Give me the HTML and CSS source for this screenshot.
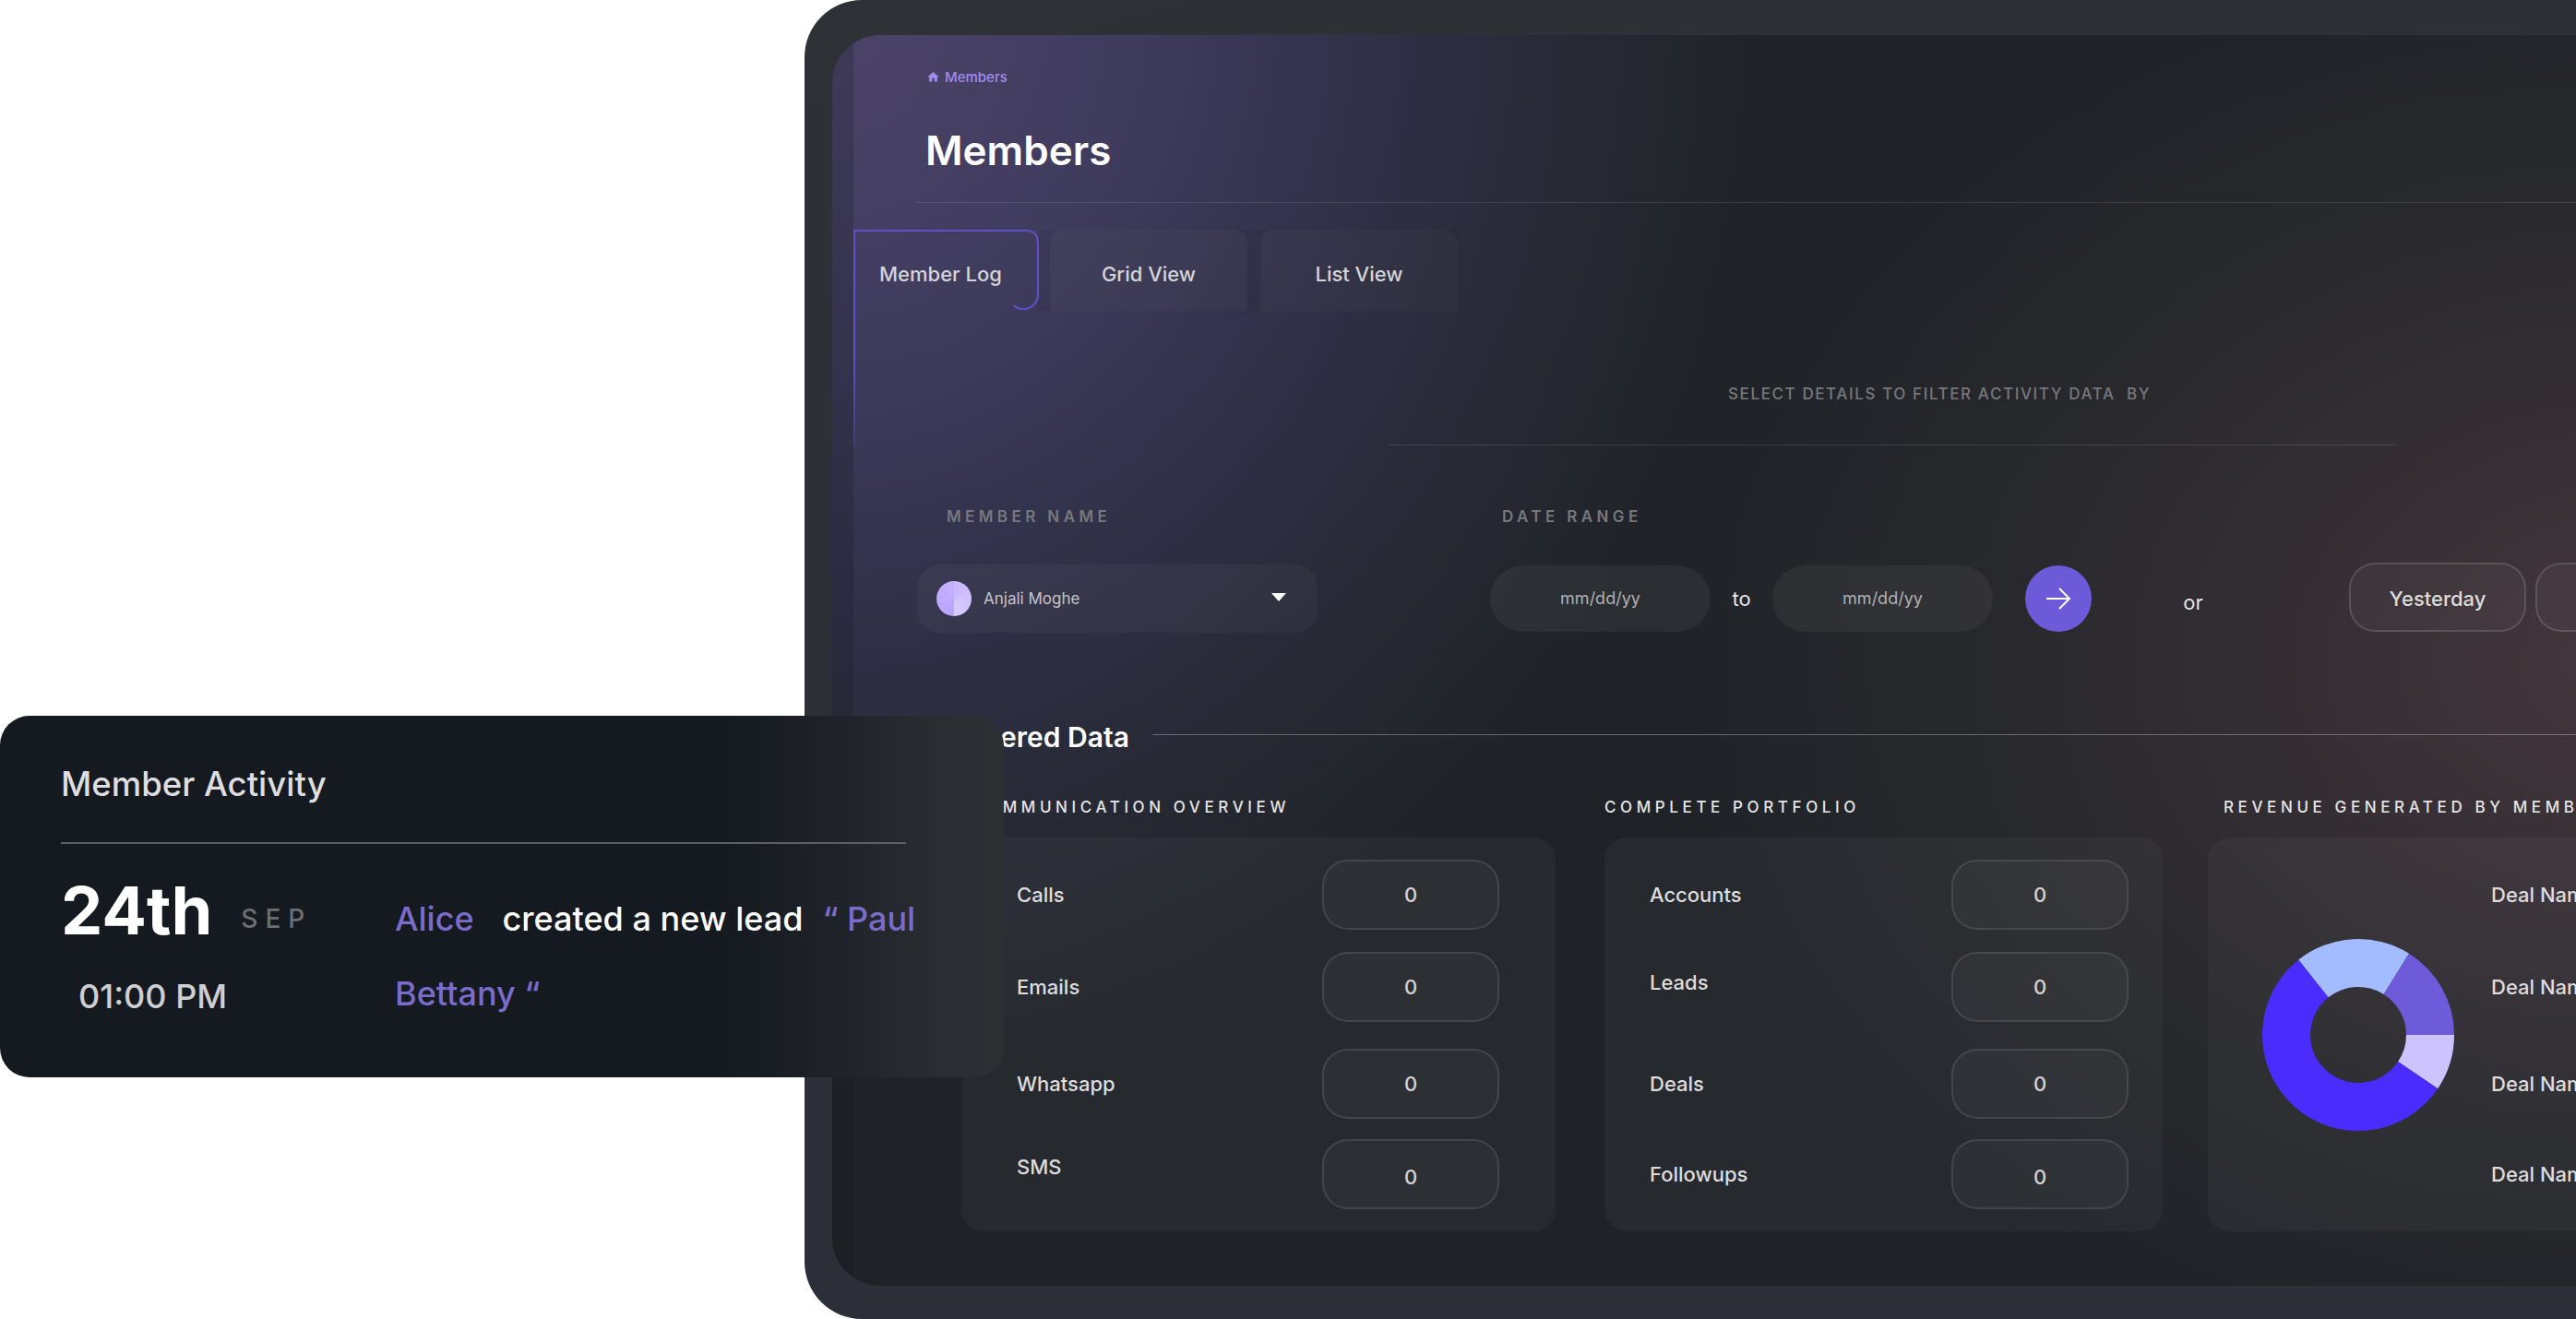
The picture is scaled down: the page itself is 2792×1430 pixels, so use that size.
FILE: index.html
```html
<!DOCTYPE html>
<html lang="en">
<head>
    <meta charset="UTF-8">
    <title>Members</title>
    <link rel="stylesheet" href="styles.css">
</head>
<body>
    <div id="pagewrap">

        <!-- Tablet frame with the members page -->
        <div class="device">
            <div class="screen">
                <div class="rail"></div>
                <main class="main">
                    <div class="crumbs">
                        <svg class="home-icon" viewBox="0 0 24 24"><path d="M10 20v-6h4v6h5v-8h3L12 3 2 12h3v8z"/></svg>
                        <span>Members</span>
                    </div>
                    <h1 class="page-title">Members</h1>
                    <div class="page-rule"></div>

                    <!-- Tabs -->
                    <div class="tabs">
                        <div class="tab tab-active">
                            Member Log
                            <svg class="tab-outline" viewBox="0 0 204 238">
                                <defs>
                                    <linearGradient id="tabFade" gradientUnits="userSpaceOnUse" x1="0" y1="0" x2="0" y2="236">
                                        <stop offset="0" stop-color="#5f50cc"/>
                                        <stop offset="0.6" stop-color="#5f50cc"/>
                                        <stop offset="1" stop-color="#5f50cc" stop-opacity="0.2"/>
                                    </linearGradient>
                                </defs>
                                <path class="tab-left" d="M1 0V236"/>
                                <path class="tab-edge" d="M1 1H188C195 1 200 6 200 14V70C200 80 192 86 184 86C180 86 176 84 174 82"/>
                            </svg>
                        </div>
                        <div class="tab-rest">
                            <div class="tab">Grid View</div>
                            <div class="tab">List View</div>
                        </div>
                    </div>

                    <!-- Filters -->
                    <p class="filter-title">SELECT DETAILS TO FILTER ACTIVITY DATA &nbsp;BY</p>
                    <div class="filter-rule"></div>

                    <div class="filters">
                        <div class="field-member">
                            <div class="field-label">MEMBER NAME</div>
                            <div class="member-select">
                                <span class="avatar"></span>
                                <span class="member-name">Anjali Moghe</span>
                                <span class="caret"></span>
                            </div>
                        </div>
                        <div class="field-date">
                            <div class="field-label">DATE RANGE</div>
                            <div class="date-controls">
                                <div class="date-input">mm/dd/yy</div>
                                <span class="joiner">to</span>
                                <div class="date-input">mm/dd/yy</div>
                                <button class="go-button">
                                    <svg viewBox="0 0 30 26"><path d="M2 13H27M16 2L27 13L16 24"/></svg>
                                </button>
                                <span class="joiner joiner-or">or</span>
                                <div class="quick-range">Yesterday</div>
                                <div class="quick-range">Week</div>
                            </div>
                        </div>
                    </div>

                    <!-- Filtered data -->
                    <div class="data-heading">
                        <h2>Filtered Data</h2>
                        <div class="data-line"></div>
                    </div>

                    <div class="columns">
                        <section class="col col-comm">
                            <h3>COMMUNICATION OVERVIEW</h3>
                            <div class="panel">
                                <div class="row"><span class="row-label">Calls</span><span class="value">0</span></div>
                                <div class="row"><span class="row-label">Emails</span><span class="value">0</span></div>
                                <div class="row row-far"><span class="row-label">Whatsapp</span><span class="value">0</span></div>
                                <div class="row row-near"><span class="row-label up-8">SMS</span><span class="value value-low">0</span></div>
                            </div>
                        </section>
                        <section class="col col-port">
                            <h3>COMPLETE PORTFOLIO</h3>
                            <div class="panel">
                                <div class="row"><span class="row-label">Accounts</span><span class="value">0</span></div>
                                <div class="row"><span class="row-label up-5">Leads</span><span class="value">0</span></div>
                                <div class="row row-far"><span class="row-label">Deals</span><span class="value">0</span></div>
                                <div class="row row-near"><span class="row-label">Followups</span><span class="value value-low">0</span></div>
                            </div>
                        </section>
                        <section class="col col-rev">
                            <h3>REVENUE GENERATED BY MEMBER</h3>
                            <div class="panel panel-rev">
                                <svg class="donut" viewBox="0 0 208 208">
                                    <path fill="#cdc4ff" d="M208 104A104 104 0 0 1 190.2 162.2L147.1 133.1A52 52 0 0 0 156 104Z"/>
                                    <path fill="#4a2cff" d="M190.2 162.2A104 104 0 1 1 39.3 22.6L71.6 63.3A52 52 0 1 0 147.1 133.1Z"/>
                                    <path fill="#a3bbff" d="M39.3 22.6A104 104 0 0 1 159.1 15.8L131.6 59.9A52 52 0 0 0 71.6 63.3Z"/>
                                    <path fill="#6d5bd9" d="M159.1 15.8A104 104 0 0 1 208 104H156A52 52 0 0 0 131.6 59.9Z"/>
                                </svg>
                                <div class="deal-list">
                                    <div class="row"><span class="row-label">Deal Name</span></div>
                                    <div class="row"><span class="row-label">Deal Name</span></div>
                                    <div class="row row-far"><span class="row-label">Deal Name</span></div>
                                    <div class="row row-near"><span class="row-label">Deal Name</span></div>
                                </div>
                            </div>
                        </section>
                    </div>
                </main>
            </div>
        </div>

        <!-- Floating activity card -->
        <aside class="activity-card">
            <h2 class="activity-title">Member Activity</h2>
            <div class="activity-rule"></div>
            <div class="activity-body">
                <div class="activity-when">
                    <div class="activity-date"><strong>24th</strong><span class="activity-month">SEP</span></div>
                    <div class="activity-time">01:00 PM</div>
                </div>
                <p class="activity-text"><span class="who">Alice</span><span class="what">created a new lead</span><span class="who">“ Paul Bettany “</span></p>
            </div>
        </aside>

    </div>
</body>
</html>
```
FILE: styles.css
```css
/* General styles */
* {
    box-sizing: border-box;
}

html, body {
    margin: 0;
    background-color: #fff;
}

body {
    font-family: Inter, "Liberation Sans", sans-serif;
}

#pagewrap {
    position: relative;
    width: 2792px;
    height: 1430px;
    overflow: hidden;
}

/* Tablet frame */
.device {
    width: 2200px;
    height: 1430px;
    margin-left: 872px;
    padding: 38px 0 36px 30px;
    border-radius: 62px 0 0 62px;
    background: linear-gradient(165deg, #2e3135 0%, #2d2f38 55%, #2c2e38 100%);
}

.screen {
    display: flex;
    height: 100%;
    overflow: hidden;
    border-radius: 52px 0 0 52px;
    background-color: #1f2327;
    background-image:
        radial-gradient(ellipse 1050px 800px at 1950px 680px, rgba(72, 56, 64, 0.92) 0%, rgba(66, 54, 60, 0.62) 35%, rgba(58, 52, 56, 0.3) 68%, rgba(60, 50, 55, 0) 100%),
        radial-gradient(ellipse 1040px 1180px at 0px -30px, #4c4469 0%, #403c5e 30%, #34334e 50%, #2b2c3d 68%, #24272f 85%, rgba(31, 35, 39, 0) 100%);
}

.rail {
    flex: none;
    width: 23px;
    background-color: rgba(20, 22, 28, 0.22);
}

.main {
    flex: 1;
    min-width: 0;
}

/* Page header */
.crumbs {
    display: flex;
    align-items: center;
    gap: 5px;
    height: 20px;
    margin: 35px 0 0 79px;
    color: #a18cf0;
    font-size: 15px;
    font-weight: 500;
}

.home-icon {
    width: 15px;
    height: 15px;
    fill: #a18cf0;
}

.page-title {
    margin: 42px 0 0 78px;
    color: #fff;
    font-size: 44px;
    font-weight: 600;
    line-height: 56px;
}

.page-rule {
    height: 1px;
    margin: 28px 0 0 68px;
    background-color: rgba(255, 255, 255, 0.12);
}

/* Tabs */
.tabs {
    display: flex;
    margin-top: 29px;
}

.tab-rest {
    display: flex;
    gap: 14px;
    padding-left: 13px;
    background-color: rgba(0, 0, 0, 0.05);
}

.tab {
    display: flex;
    align-items: center;
    justify-content: center;
    width: 214px;
    height: 88px;
    padding-top: 8px;
    border-radius: 14px 14px 0 0;
    background-color: rgba(255, 255, 255, 0.035);
    color: #d4d4d8;
    font-size: 22px;
    font-weight: 500;
}

.tab-active {
    position: relative;
    justify-content: flex-start;
    width: 200px;
    padding-left: 28px;
    background: none;
}

.tab-outline {
    position: absolute;
    top: 0;
    left: 0;
    width: 204px;
    height: 238px;
    fill: none;
    stroke-width: 2;
}

.tab-left {
    stroke: url(#tabFade);
}

.tab-edge {
    stroke: #5f50cc;
}

/* Filters */
.filter-title {
    margin: 80px 0 0 948px;
    color: #77787c;
    font-size: 17px;
    font-weight: 500;
    letter-spacing: 1.6px;
    line-height: 20px;
}

.filter-rule {
    width: 1091px;
    height: 1px;
    margin: 45px 0 0 580px;
    background-color: rgba(255, 255, 255, 0.12);
}

.filters {
    display: flex;
    margin: 67px 0 0 69px;
}

.field-member {
    flex: none;
    width: 434px;
    margin-right: 187px;
}

.field-label {
    height: 20px;
    color: #77787c;
    font-size: 17px;
    font-weight: 600;
    letter-spacing: 4.4px;
    line-height: 20px;
}

.field-member .field-label {
    padding-left: 32px;
}

.field-date .field-label {
    padding-left: 13px;
}

.member-select {
    display: flex;
    align-items: center;
    height: 74px;
    margin-top: 42px;
    padding: 0 34px 0 21px;
    border-radius: 24px;
    background-color: rgba(255, 255, 255, 0.035);
}

.avatar {
    flex: none;
    width: 38px;
    height: 38px;
    border-radius: 50%;
    background: conic-gradient(#c9b8ff 0deg, #d7caff 180deg, #b9a4ff 180deg, #c3b1ff 360deg);
}

.member-name {
    flex: 1;
    margin-left: 13px;
    color: #c4c4c8;
    font-size: 17px;
}

.caret {
    width: 0;
    height: 0;
    margin-bottom: 4px;
    border-top: 9px solid #fff;
    border-right: 8px solid transparent;
    border-left: 8px solid transparent;
}

.date-controls {
    display: flex;
    align-items: flex-end;
    height: 75px;
    margin-top: 40px;
}

.date-input {
    flex: none;
    width: 239px;
    height: 72px;
    border-radius: 36px;
    background-color: rgba(255, 255, 255, 0.05);
    color: #b0b0b4;
    font-size: 18px;
    line-height: 72px;
    text-align: center;
}

.joiner {
    flex: none;
    width: 67px;
    color: #e4e4e6;
    font-size: 22px;
    line-height: 72px;
    text-align: center;
}

.joiner-or {
    width: 50px;
    margin: 0 144px -4px 85px;
}

.go-button {
    display: flex;
    flex: none;
    align-items: center;
    justify-content: center;
    width: 72px;
    height: 72px;
    margin-left: 35px;
    padding: 0;
    border: none;
    border-radius: 50%;
    background-color: #6c5ad9;
}

.go-button svg {
    width: 30px;
    height: 26px;
    fill: none;
    stroke: #fff;
    stroke-width: 2;
}

.quick-range {
    display: flex;
    flex: none;
    align-items: center;
    justify-content: center;
    width: 192px;
    height: 75px;
    margin-right: 10px;
    padding-top: 2px;
    border: 2px solid rgba(255, 255, 255, 0.14);
    border-radius: 28px;
    background-color: rgba(255, 255, 255, 0.03);
    color: #dcdcde;
    font-size: 22px;
    font-weight: 500;
}

/* Filtered data */
.data-heading {
    display: flex;
    align-items: flex-start;
    gap: 25px;
    margin: 95px 0 0 115px;
}

.data-heading h2 {
    margin: 0;
    color: #fff;
    font-size: 30px;
    font-weight: 600;
    line-height: 36px;
}

.data-line {
    flex: 1;
    height: 1px;
    margin-top: 15px;
    background-color: rgba(255, 255, 255, 0.3);
}

.columns {
    display: flex;
    margin: 48px 0 0 117px;
}

.col h3 {
    height: 20px;
    margin: 0 0 23px;
    color: #e6e6e8;
    font-size: 17px;
    font-weight: 500;
    letter-spacing: 4.6px;
    line-height: 20px;
    white-space: nowrap;
}

.col-comm {
    flex: none;
    width: 644px;
    margin-right: 53px;
}

.col-comm h3 {
    padding-left: 10px;
}

.col-port {
    flex: none;
    width: 605px;
    margin-right: 49px;
}

.col-rev {
    flex: none;
    width: 700px;
}

.col-rev h3 {
    padding-left: 17px;
}

.panel {
    height: 427px;
    padding: 24px 0;
    border-radius: 24px;
    background-color: rgba(255, 255, 255, 0.035);
}

.col-comm .panel {
    padding-right: 61px;
    padding-left: 60px;
}

.col-port .panel {
    padding-right: 37px;
    padding-left: 49px;
}

.panel-rev {
    display: flex;
    align-items: center;
    gap: 40px;
    padding-left: 59px;
}

.donut {
    flex: none;
    width: 208px;
    height: 208px;
}

.deal-list {
    flex: 1;
    min-width: 0;
}

.row {
    display: flex;
    align-items: center;
    justify-content: space-between;
    height: 76px;
    margin-top: 24px;
}

.row:first-child {
    margin-top: 0;
}

.row-far {
    margin-top: 29px;
}

.row-near {
    margin-top: 22px;
}

.row-label {
    color: #dddddf;
    font-size: 22px;
    font-weight: 500;
    white-space: nowrap;
}

.up-5 {
    margin-bottom: 10px;
}

.up-8 {
    margin-bottom: 16px;
}

.value {
    flex: none;
    width: 192px;
    height: 76px;
    padding-top: 1px;
    border: 2px solid rgba(255, 255, 255, 0.1);
    border-radius: 28px;
    background-color: rgba(255, 255, 255, 0.03);
    color: #d4d4d6;
    font-size: 22px;
    font-weight: 500;
    line-height: 70px;
    text-align: center;
}

.value-low {
    padding-top: 4px;
}

/* Floating activity card */
.activity-card {
    position: absolute;
    top: 776px;
    left: 0;
    width: 1088px;
    height: 392px;
    padding: 52px 0 0 66px;
    border-radius: 32px;
    background: linear-gradient(90deg, #151920 0%, #151920 72%, #202329 84%, #2a2d31 94%, #2d3033 100%);
}

.activity-title {
    margin: 0;
    color: #dedee0;
    font-size: 36.5px;
    font-weight: 500;
    line-height: 44px;
}

.activity-rule {
    width: 916px;
    height: 2px;
    margin-top: 41px;
    background-color: #5d5f63;
}

.activity-body {
    display: flex;
    margin-top: 30px;
}

.activity-when {
    flex: none;
    width: 362px;
}

.activity-date {
    display: flex;
    align-items: center;
    height: 84px;
    line-height: 84px;
}

.activity-date strong {
    color: #fff;
    font-size: 72px;
    font-weight: 700;
}

.activity-month {
    margin: 18px 0 0 31px;
    color: #6c6e72;
    font-size: 28px;
    font-weight: 500;
    letter-spacing: 8px;
}

.activity-time {
    margin: 11px 0 0 19px;
    color: #cfcfd2;
    font-size: 36px;
    font-weight: 500;
    line-height: 80px;
}

.activity-text {
    width: 590px;
    margin: 11px 0 0;
    color: #fff;
    font-size: 36px;
    font-weight: 500;
    line-height: 81px;
}

.who {
    color: #7a6cc8;
}

.what {
    margin: 0 21px 0 31px;
}
```
